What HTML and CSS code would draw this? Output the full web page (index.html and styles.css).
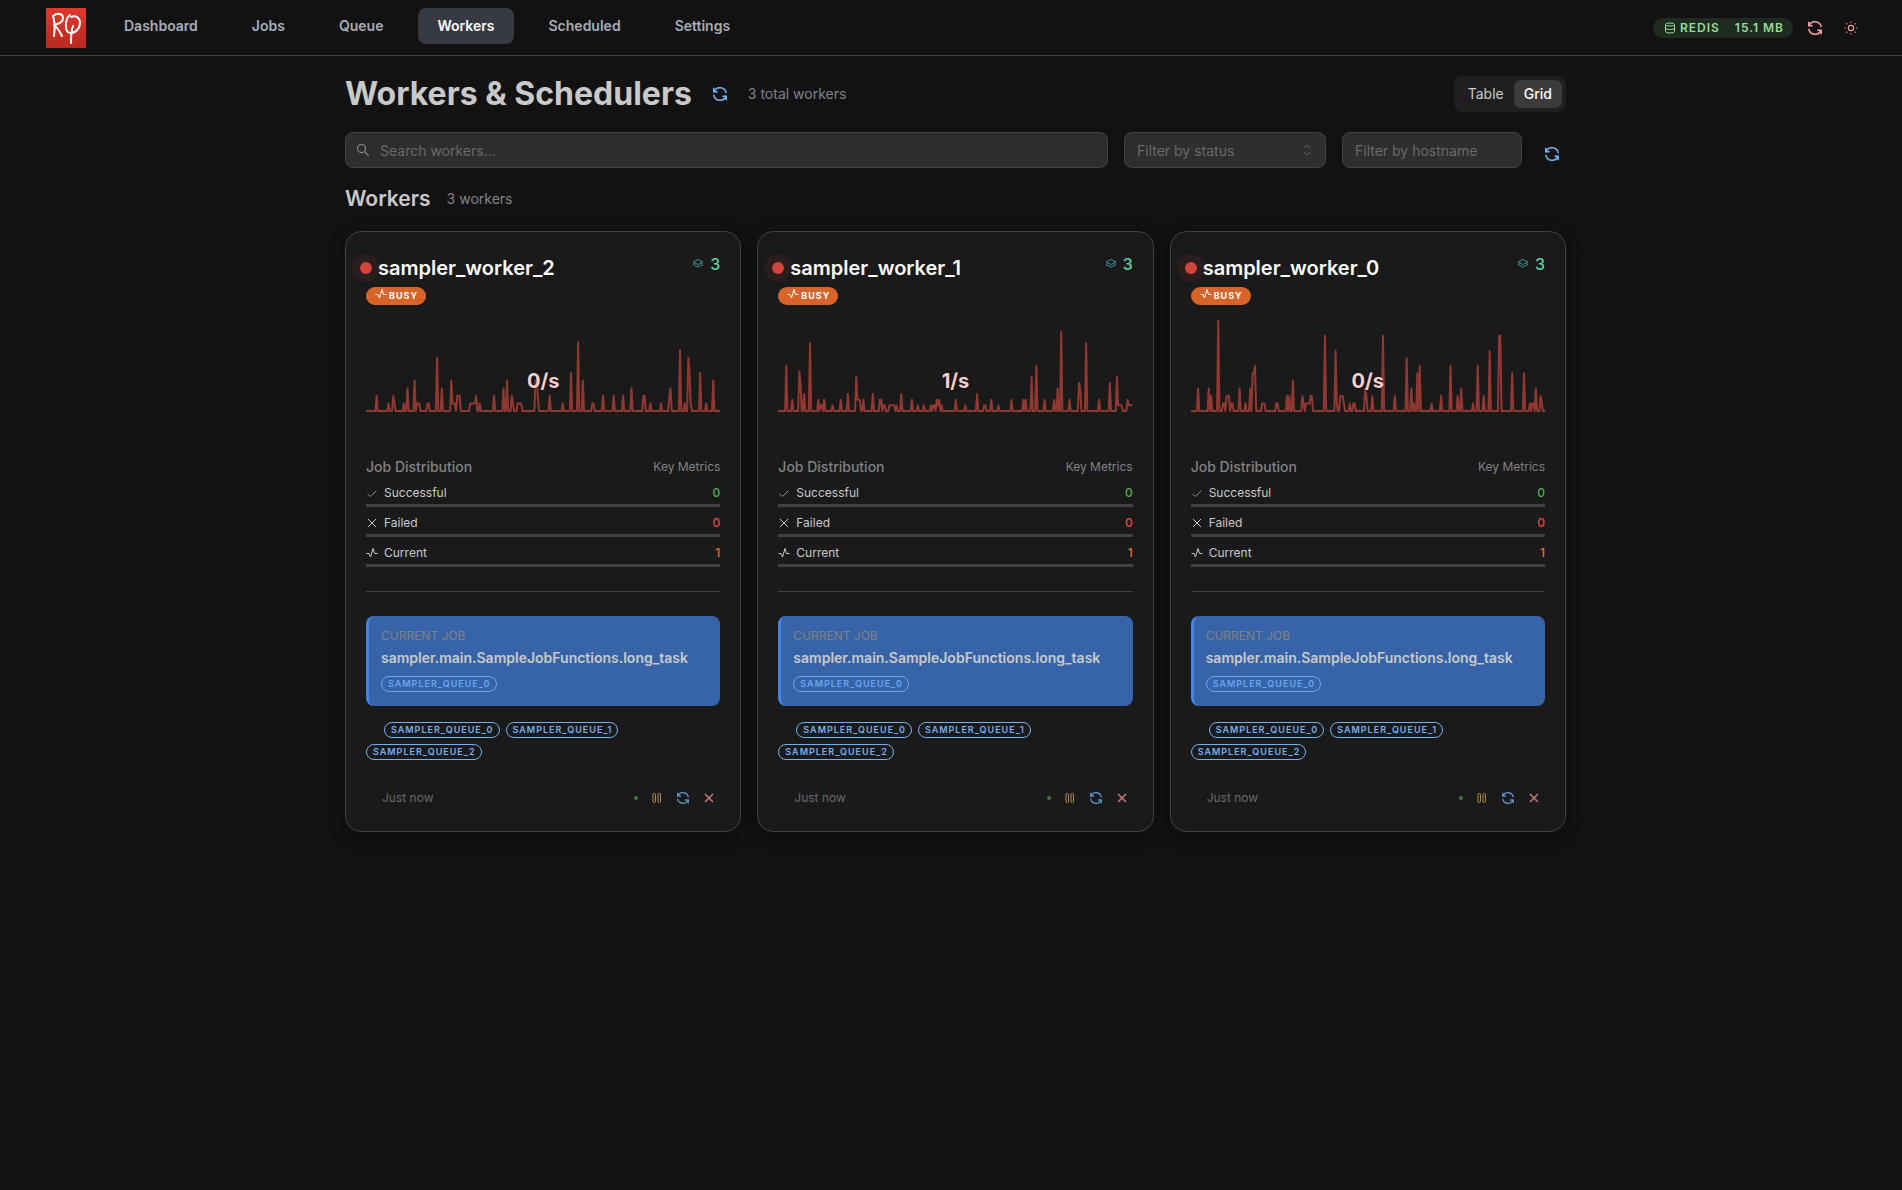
FILE: index.html
```html
<!DOCTYPE html>
<html lang="en">
<head>
<meta charset="utf-8">
<meta name="viewport" content="width=device-width, initial-scale=1">
<title>Workers &amp; Schedulers</title>
<link rel="stylesheet" href="styles.css">
</head>
<body>
<svg class="sprite" aria-hidden="true">
  <symbol id="i-sync" viewBox="3 3 18 18"><path d="M20 11A8.100 8.100 0 0 0 4.500 9M4 4v5h5M4 13a8.100 8.100 0 0 0 15.500 2M20 20v-5h-5"/></symbol>
  <symbol id="i-db" viewBox="0 0 24 24"><ellipse cx="12" cy="5" rx="9" ry="3"/><path d="M3 5v14c0 1.700 4 3 9 3s9-1.300 9-3V5M3 12c0 1.700 4 3 9 3s9-1.300 9-3"/></symbol>
  <symbol id="i-sun" viewBox="0 0 24 24"><circle cx="12" cy="12" r="4.500"/><path d="M12 1v2M12 21v2M1 12h2M21 12h2M4.200 4.200l1.400 1.400M18.400 18.400l1.400 1.400M4.200 19.800l1.400-1.400M18.400 5.600l1.400-1.400"/></symbol>
  <symbol id="i-search" viewBox="0 0 24 24"><circle cx="9.500" cy="9.500" r="7"/><path d="M15 15l7 7"/></symbol>
  <symbol id="i-updown" viewBox="0 0 24 24"><path d="M6 8l6-6 6 6M6 16l6 6 6-6"/></symbol>
  <symbol id="i-layers" viewBox="0 0 24 24"><path d="M12 3l10 5-10 5L2 8zM5 11l-3 2 10 5 10-5-3-2"/></symbol>
  <symbol id="i-pulse" viewBox="0 0 24 24"><path d="M1 13h5l3 7L14 3l3 10h6"/></symbol>
  <symbol id="i-check" viewBox="0 0 24 24"><path d="M3 14l6 5L21 7"/></symbol>
  <symbol id="i-x" viewBox="0 0 24 24"><path d="M4 4l16 16M20 4L4 20"/></symbol>
  <symbol id="i-pause" viewBox="0 0 24 24"><rect x="4" y="3" width="5" height="18" rx="2"/><rect x="14" y="3" width="5" height="18" rx="2"/></symbol>
</svg>

<header class="topbar">
  <a class="logo" href="#" aria-label="RQ home">
    <svg viewBox="0 0 40 40" aria-hidden="true">
      <defs><linearGradient id="red" x1="0" y1="0" x2="0" y2="1"><stop offset="0" stop-color="#e0382c"/><stop offset="1" stop-color="#b82a20"/></linearGradient></defs>
      <rect width="40" height="40" fill="url(#red)"/>
      <path class="logo-mark" d="M8 28C9 21 9 14 7 8M7 8c5-4 10-2 10 2s-4 6-9 7c3 2 6 7 8 11M24 7c-5 3-6 18 0 18 7 0 10-6 10-10 0-5-4-8-9-6M27 18c-2 5-2 10-2 17"/>
    </svg>
  </a>
  <nav class="nav">
    <a href="#">Dashboard</a>
    <a href="#">Jobs</a>
    <a href="#">Queue</a>
    <a class="active" href="#">Workers</a>
    <a href="#">Scheduled</a>
    <a href="#">Settings</a>
  </nav>
  <div class="status">
    <span class="redis"><svg class="icon s12"><use href="#i-db"/></svg><span>REDIS</span><span class="mem">15.1 MB</span></span>
    <button class="icon-btn pink" aria-label="Refresh"><svg class="icon s14"><use href="#i-sync"/></svg></button>
    <button class="icon-btn pink" aria-label="Toggle theme"><svg class="icon s14"><use href="#i-sun"/></svg></button>
  </div>
</header>

<div class="page">
<main class="content">
  <div class="title-row">
    <h1>Workers &amp; Schedulers</h1>
    <button class="icon-btn blue" aria-label="Refresh workers"><svg class="icon s14"><use href="#i-sync"/></svg></button>
    <span class="muted">3 total workers</span>
    <div class="toggle"><button>Table</button><button class="on">Grid</button></div>
  </div>

  <form class="filters">
    <label class="field grow"><svg class="icon s14"><use href="#i-search"/></svg><input type="text" placeholder="Search workers..." aria-label="Search workers"></label>
    <label class="field status-field"><select aria-label="Filter by status"><option>Filter by status</option><option>Busy</option><option>Idle</option></select><svg class="icon s12"><use href="#i-updown"/></svg></label>
    <label class="field host-field"><input type="text" placeholder="Filter by hostname" aria-label="Filter by hostname"></label>
    <button type="button" class="icon-btn blue" aria-label="Reload list"><svg class="icon s14"><use href="#i-sync"/></svg></button>
  </form>

  <div class="section-row"><h2>Workers</h2><span class="muted">3 workers</span></div>

  <div class="grid" id="grid"></div>

  <template id="card">
    <article class="card">
      <div class="card-head">
        <div class="name"><span class="dot"></span><h3></h3></div>
        <span class="count"><svg class="icon s12"><use href="#i-layers"/></svg>3</span>
      </div>
      <span class="busy"><svg class="icon s12"><use href="#i-pulse"/></svg>BUSY</span>
      <div class="chart">
        <svg viewBox="0 0 1062 300" preserveAspectRatio="none" aria-hidden="true"><path/></svg>
        <span class="rate"></span>
      </div>
      <div class="dist-head"><h4>Job Distribution</h4><span>Key Metrics</span></div>
      <div class="metric ok"><svg class="icon s12"><use href="#i-check"/></svg><span>Successful</span><b>0</b></div>
      <div class="metric bad"><svg class="icon s12"><use href="#i-x"/></svg><span>Failed</span><b>0</b></div>
      <div class="metric cur"><svg class="icon s12"><use href="#i-pulse"/></svg><span>Current</span><b>1</b></div>
      <hr>
      <section class="job">
        <p class="job-label">CURRENT JOB</p>
        <p class="job-name">sampler.main.SampleJobFunctions.long_task</p>
        <span class="tag">SAMPLER_QUEUE_0</span>
      </section>
      <div class="tags"><span class="tag">SAMPLER_QUEUE_0</span><span class="tag">SAMPLER_QUEUE_1</span><span class="tag">SAMPLER_QUEUE_2</span></div>
      <footer class="card-foot">
        <span>Just now</span>
        <i class="live"></i>
        <button class="icon-btn amber" aria-label="Pause"><svg class="icon s12"><use href="#i-pause"/></svg></button>
        <button class="icon-btn steel" aria-label="Restart"><svg class="icon s12"><use href="#i-sync"/></svg></button>
        <button class="icon-btn rose" aria-label="Stop"><svg class="icon s12 bold"><use href="#i-x"/></svg></button>
      </footer>
    </article>
  </template>
</main>
</div>
<script src="workers.js"></script>
</body>
</html>
```

FILE: styles.css
```css
* { box-sizing: border-box; }
body { margin: 0; background: #121212; color: #c9c9c9; font: 14px/20px Inter, "Liberation Sans", sans-serif; }
h1, h2, h3, h4, p { margin: 0; }
button, input, select { font: inherit; color: inherit; }
button { border: 0; background: none; padding: 0; cursor: pointer; }
.sprite { position: absolute; width: 0; height: 0; }
.icon { flex: none; display: block; fill: none; stroke: currentColor; stroke-width: 2; }
.s12 { width: 12px; height: 12px; }
.s14 { width: 14px; height: 14px; }
.icon.bold { stroke-width: 3; }
.icon-btn { flex: none; width: 28px; height: 28px; display: grid; place-items: center; }
.pink { color: #f2a09a; }
.blue { color: #74b0f4; }
.steel { color: #5a8cc4; }
.amber { color: #b98a4e; }
.rose { color: #c87a76; }
.muted { color: #828282; }

.topbar { display: flex; align-items: center; height: 56px; padding: 0 37px 0 46px; border-bottom: 1px solid #424242; }
.logo { width: 40px; height: 40px; margin-right: 19px; }
.logo svg { display: block; }
.logo-mark { fill: none; stroke: #fff; stroke-width: 2; stroke-linecap: round; stroke-linejoin: round; }
.nav { display: flex; gap: 16px; padding-bottom: 3px; }
.nav a { padding: 8px 19px; border-radius: 8px; color: #a6adb7; font-weight: 600; text-decoration: none; }
.nav a.active { background: #373a43; color: #fff; }
.status { display: flex; align-items: center; gap: 8px; margin-left: auto; }
.redis { display: flex; align-items: center; gap: 4px; height: 20px; padding: 0 9px 0 11px; border-radius: 10px; background: #1f2b20; color: #98dc96; font-size: 12px; font-weight: 600; letter-spacing: 1px; }
.mem { margin-left: 11px; }

.page { padding: 20px 20px 40px 29px; }
.content { max-width: 1221px; margin: 0 auto; }
.title-row { display: flex; align-items: center; gap: 14px; height: 36px; }
h1 { font-size: 32px; line-height: 36px; font-weight: 700; }
.toggle { display: flex; margin-left: auto; height: 36px; padding: 4px; border-radius: 8px; background: #1f1f1f; }
.toggle button { padding: 0 10px; border-radius: 7px; }
.toggle .on { background: #3b3b3b; color: #fff; font-weight: 500; }

.filters { display: flex; align-items: flex-end; gap: 16px; margin: 20px 0 21px; }
.field { position: relative; display: flex; align-items: center; height: 36px; padding: 0 12px; border: 1px solid #424242; border-radius: 8px; background: #2e2e2e; color: #696969; }
.field input, .field select { width: 100%; border: 0; padding: 2px 0 0; outline: 0; background: none; appearance: none; color: #696969; }
.field input::placeholder { color: #696969; opacity: 1; }
.field.grow { flex: 1; padding-left: 10px; gap: 10px; color: #8c8c8c; }
.status-field { width: 202px; }
.host-field { width: 180px; }

.section-row { display: flex; align-items: center; gap: 16px; height: 20px; margin-bottom: 22px; }
h2 { font-size: 21px; line-height: 20px; font-weight: 600; }

.grid { display: grid; grid-template-columns: repeat(3, minmax(0, 1fr)); gap: 16px; }
.card { padding: 20px; border: 1px solid #424242; border-radius: 16px; background: #1a1a1a; box-shadow: 0 4px 16px #0004; }
.card-head { display: flex; justify-content: space-between; align-items: flex-start; height: 35px; }
.name { display: flex; align-items: center; gap: 6px; margin: 4px 0 0 -6px; height: 24px; }
.dot { width: 12px; height: 12px; border-radius: 50%; background: #d1433b; box-shadow: 0 0 0 8px #d1433b18; }
h3 { font-size: 20px; line-height: 24px; font-weight: 600; color: #fff; }
.count { display: flex; align-items: center; gap: 6px; font-size: 16px; line-height: 24px; font-weight: 500; color: #63d0a4; }
.count .icon { color: #3f8f90; }
.busy { display: flex; align-items: center; gap: 2px; width: max-content; height: 18px; padding: 0 8px 0 9px; border-radius: 9px; background: #d8642a; color: #fff; font-size: 9px; line-height: 20px; font-weight: 700; letter-spacing: 1px; }
.busy .icon { margin-bottom: 4px; }
.chart { position: relative; height: 100px; margin: 6px 0 46px; }
.chart svg { display: block; width: 100%; height: 100px; overflow: visible; }
.chart path { fill: none; stroke: #913833; stroke-width: 6; stroke-linejoin: round; }
.rate { position: absolute; inset: 58px 0 auto; text-align: center; font-size: 20px; line-height: 24px; font-weight: 700; color: #f9cfcd; text-shadow: 0 1px 2px #0008; }
.dist-head { display: flex; justify-content: space-between; color: #828282; line-height: 20px; margin-bottom: 6px; }
.dist-head span { font-size: 12px; }
h4 { font-size: 14px; font-weight: 500; }
.metric { display: flex; align-items: center; gap: 6px; height: 24px; padding-bottom: 1px; border-bottom: 3px solid #424242; margin-bottom: 6px; font-size: 12px; }
.metric b { margin-left: auto; font-weight: 500; }
.ok b { color: #4fae4e; }
.ok .icon { color: #8c8c8c; }
.bad b { color: #e5483f; }
.cur b { color: #e8702a; }
hr { border: 0; border-top: 1px solid #424242; margin: 24px 0; }
.job { height: 90px; padding: 10px 12px; border-left: 3px solid #4484e8; border-radius: 8px; background: #3764a8; }
.job-label { font-size: 12px; color: #828282; }
.job-name { line-height: 24px; font-weight: 600; }
.job .tag { display: table; margin-top: 6px; color: #6aa5ee; border-color: #6aa5ee; }
.tag { height: 16px; padding: 0 5px 0 6px; border: 1px solid #74b0f4; border-radius: 8px; color: #74b0f4; font-size: 9px; line-height: 14px; font-weight: 600; white-space: nowrap; letter-spacing: 1px; }
.tags { display: flex; flex-wrap: wrap; gap: 6px; margin-top: 16px; }
.tags .tag:first-child { margin-left: 18px; }
.card-foot { display: flex; align-items: center; height: 26px; margin: 25px -2px 0 16px; color: #696969; font-size: 12px; }
.card-foot .icon-btn { width: 26px; }
.live { width: 4px; height: 4px; margin: 0 6px 0 auto; border-radius: 50%; background: #3f7a3d; }
```

FILE: workers.js
```js
// Throughput samples: "position:value" or "from-to:value" along a 1062-unit axis.
const workers = [
  { name: "sampler_worker_2", rate: "0/s", unit: 22.8, data: "32:2 68:1 83:2 87:1 115:1 125:3 147:4 151-159:1 185-190:1 212:7 229:3 255:4 259-268:1 272-281:2 312-326:1 330:2 341:1 384:2 412:3 423:4 438:2 442:1 455-467:1 507:4 511:4 515:2 551:2 588:1 613:5 635:9 649:4 678-682:1 711:2 742:2 772:2 797:3 832-835:2 854:1 883:1 910:2 914:3 943:8 957:1 965:7 969:5 973:1 1001:5 1019:1 1041:4" },
  { name: "sampler_worker_1", rate: "1/s", unit: 17, data: "25:8 43:2 64:7 68:5 79:3 97:12 122:2 127-130:1 140:2 162:1 190:2 209:3 234:6 238-244:2 256:2 284:3 307-310:2 315-320:1 335-347:1 354:1 370:3 402:2 418:1 437:1 458:1 465-470:1 476:2 480:1 484:2 489:1 532:2 561:1 597:3 619-623:1 640:2 662:1 698:2 734:2 744:2 759:6 774:8 799:2 828:2 838:4 849:14 874:2 902:5 906:4 925:12 961:2 994:5 1015:6 1019-1029:1 1047:2 1052-1062:1" },
  { name: "sampler_worker_0", rate: "0/s", unit: 22.6, data: "21:3 53:3 60:2 82:12 96-101:1 106-112:2 122-126:1 144:3 165:1 176:3 183:5 187:5 191:6 212-219:1 255-259:1 287:2 295:2 306:4 333:2 338:1 344-354:1 358-364:2 403:10 432:8 438:1 446-453:2 458:1 475:1 485-490:1 522:3 526:2 543:2 576:10 611:2 648:7 659:3 669:1 680:5 684:6 720:1 748:2 777:6 799:2 810:3 846:1 860:6 879:2 896:8 924-928:10 961:5 997:5 1015:1 1022-1026:1 1033:3 1048:2 1052:1" }
];

const COUNT = 300;
const STEP = 1062 / (COUNT - 1);
const BASE = 300;

function linePath(worker) {
  const samples = new Array(COUNT).fill(0);
  for (const item of worker.data.split(" ")) {
    const [span, value] = item.split(":");
    const [from, to = from] = span.split("-");
    const last = Math.round(to / STEP);
    for (let i = Math.round(from / STEP); i <= last; i++) samples[i] = Number(value);
  }
  return "M" + samples.map((v, i) => (i * STEP).toFixed(1) + " " + (BASE - v * worker.unit).toFixed(1)).join("L");
}

const template = document.getElementById("card");
for (const worker of workers) {
  const card = template.content.cloneNode(true);
  card.querySelector("h3").textContent = worker.name;
  card.querySelector(".rate").textContent = worker.rate;
  card.querySelector(".chart path").setAttribute("d", linePath(worker));
  document.getElementById("grid").append(card);
}
```
